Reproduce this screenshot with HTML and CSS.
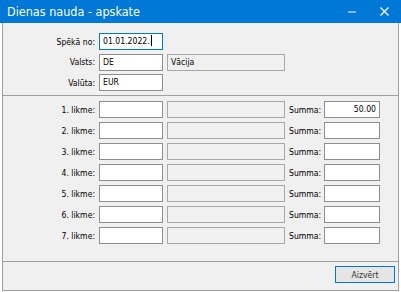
FILE: index.html
```html
<!DOCTYPE html>
<html lang="lv">
<head>
    <meta charset="UTF-8">
    <title>Dienas nauda - apskate</title>
    <link rel="stylesheet" href="styles.css">
</head>
<body>

    <div class="window">
        <div class="titlebar">
            <span class="title">Dienas nauda - apskate</span>
            <div class="controls">
                <span class="ctl">
                    <svg width="8" height="8" viewBox="0 0 8 8"><rect x="0" y="3.5" width="8" height="1" fill="#fff"/></svg>
                </span>
                <span class="ctl">
                    <svg width="9" height="9" viewBox="0 0 9 9"><path d="M0.5 0.5 L8.5 8.5 M8.5 0.5 L0.5 8.5" stroke="#fff" stroke-width="1.3"/></svg>
                </span>
            </div>
        </div>

        <div class="frame">
            <div class="head-grid">
                <label>Spēkā no:</label>
                <div class="field focused">01.01.2022.<span class="caret"></span></div>
                <div></div>

                <label>Valsts:</label>
                <div class="field">DE</div>
                <div class="field readonly">Vācija</div>

                <label>Valūta:</label>
                <div class="field">EUR</div>
                <div></div>
            </div>

            <div class="sep"></div>

            <div class="rates">
                <label>1. likme:</label><div class="field"></div><div class="field readonly"></div>
                <span class="sum-label">Summa:</span><div class="field num">50.00</div>

                <label>2. likme:</label><div class="field"></div><div class="field readonly"></div>
                <span class="sum-label">Summa:</span><div class="field num"></div>

                <label>3. likme:</label><div class="field"></div><div class="field readonly"></div>
                <span class="sum-label">Summa:</span><div class="field num"></div>

                <label>4. likme:</label><div class="field"></div><div class="field readonly"></div>
                <span class="sum-label">Summa:</span><div class="field num"></div>

                <label>5. likme:</label><div class="field"></div><div class="field readonly"></div>
                <span class="sum-label">Summa:</span><div class="field num"></div>

                <label>6. likme:</label><div class="field"></div><div class="field readonly"></div>
                <span class="sum-label">Summa:</span><div class="field num"></div>

                <label>7. likme:</label><div class="field"></div><div class="field readonly"></div>
                <span class="sum-label">Summa:</span><div class="field num"></div>
            </div>

            <div class="sep bottom"></div>

            <div class="footer">
                <button class="btn" type="button">Aizvērt</button>
            </div>
        </div>
    </div>

</body>
</html>
```

FILE: styles.css
```css
* {
    margin: 0;
    padding: 0;
    box-sizing: border-box;
}

body {
    background: #fff;
    font-family: 'DejaVu Sans Condensed', 'DejaVu Sans', sans-serif;
    font-size: 8.6px;
    color: #000;
}

.window {
    width: 401px;
    height: 292px;
}

.titlebar {
    height: 23px;
    background-color: #0078d7;
    color: #fff;
    display: flex;
    align-items: center;
    justify-content: space-between;
    padding-left: 7px;
}

.title {
    font-size: 12.5px;
}

.controls {
    display: flex;
    height: 100%;
    padding-right: 1px;
}

.ctl {
    width: 32px;
    display: flex;
    align-items: center;
    justify-content: center;
}

.frame {
    margin: 0 2px;
    height: 268px;
    background-color: #f0f0f0;
    border: 1px solid #a0a0a0;
    border-top: none;
    padding-top: 10px;
}

.head-grid {
    display: grid;
    grid-template-columns: 92px 64px 118px;
    grid-auto-rows: 17px;
    column-gap: 4px;
    row-gap: 3.5px;
}

.rates {
    display: grid;
    grid-template-columns: 92px 64px 118px 31px 56px;
    grid-auto-rows: 17px;
    column-gap: 4px;
    row-gap: 4px;
}

label {
    text-align: right;
    align-self: center;
}

.sum-label {
    align-self: center;
}

.field {
    background-color: #fff;
    border: 1px solid #8e8e8e;
    padding: 0 3px;
    line-height: 15px;
    white-space: nowrap;
    overflow: hidden;
}

.field.focused {
    border-color: #0078d7;
}

.field.readonly {
    background-color: #f0f0f0;
    border-color: #a8a8a8;
}

.field.num {
    text-align: right;
}

.caret {
    display: inline-block;
    width: 1px;
    height: 11px;
    background: #000;
    vertical-align: -2px;
    margin-left: 1px;
}

.sep {
    border-top: 1px solid #a0a0a0;
    margin: 4px 0 5px;
}

.sep.bottom {
    margin: 17px 0 4px;
}

.footer {
    display: flex;
    justify-content: flex-end;
    padding-right: 3px;
}

.btn {
    width: 60px;
    height: 17px;
    background-color: #e5e5e5;
    border: 1px solid #0078d7;
    font-family: inherit;
    font-size: 8.6px;
    color: #333;
}
```
